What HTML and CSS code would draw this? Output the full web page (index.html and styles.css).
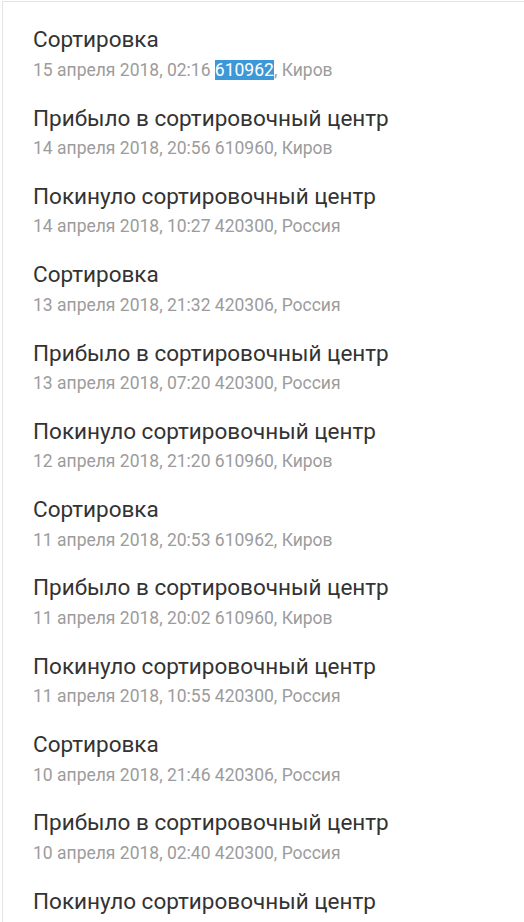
FILE: index.html
```html
<!DOCTYPE html>
<html lang="ru">
<head>
<meta charset="utf-8">
<title>Трекинг</title>
<link rel="stylesheet" href="styles.css">
</head>
<body>
<div class="card">
  <ul class="events">
    <li class="event"><div class="title">Сортировка</div><div class="meta">15 апреля 2018, 02:16 <span class="sel">610962</span>, Киров</div></li>
    <li class="event"><div class="title">Прибыло в сортировочный центр</div><div class="meta">14 апреля 2018, 20:56 610960, Киров</div></li>
    <li class="event"><div class="title">Покинуло сортировочный центр</div><div class="meta">14 апреля 2018, 10:27 420300, Россия</div></li>
    <li class="event"><div class="title">Сортировка</div><div class="meta">13 апреля 2018, 21:32 420306, Россия</div></li>
    <li class="event"><div class="title">Прибыло в сортировочный центр</div><div class="meta">13 апреля 2018, 07:20 420300, Россия</div></li>
    <li class="event"><div class="title">Покинуло сортировочный центр</div><div class="meta">12 апреля 2018, 21:20 610960, Киров</div></li>
    <li class="event"><div class="title">Сортировка</div><div class="meta">11 апреля 2018, 20:53 610962, Киров</div></li>
    <li class="event"><div class="title">Прибыло в сортировочный центр</div><div class="meta">11 апреля 2018, 20:02 610960, Киров</div></li>
    <li class="event"><div class="title">Покинуло сортировочный центр</div><div class="meta">11 апреля 2018, 10:55 420300, Россия</div></li>
    <li class="event"><div class="title">Сортировка</div><div class="meta">10 апреля 2018, 21:46 420306, Россия</div></li>
    <li class="event"><div class="title">Прибыло в сортировочный центр</div><div class="meta">10 апреля 2018, 02:40 420300, Россия</div></li>
    <li class="event"><div class="title">Покинуло сортировочный центр</div></li>
  </ul>
</div>
</body>
</html>
```
FILE: styles.css
```css
html, body {
  margin: 0;
  padding: 0;
  background: #fff;
  overflow: hidden;
}
body {
  font-family: Roboto, "Noto Sans", sans-serif;
  padding-top: 1px;
  padding-left: 2px;
}
.card {
  border-top: 1px solid #e3e3e3;
  border-left: 1px solid #e3e3e3;
  background: #fff;
  min-height: 960px;
}
.events {
  list-style: none;
  margin: 0;
  padding: 0 0 0 30px;
}
.event {
  display: flex;
  flex-direction: column;
  gap: 6.5px;
  height: 78.33px;
  box-sizing: border-box;
  padding-top: 24.2px;
}
.title {
  font-size: 22.5px;
  line-height: 26px;
  color: #333;
}
.meta {
  font-size: 17.5px;
  line-height: 22px;
  color: #9c9c9c;
}
.sel {
  background: #3d98d8;
  color: #fff;
}
```
